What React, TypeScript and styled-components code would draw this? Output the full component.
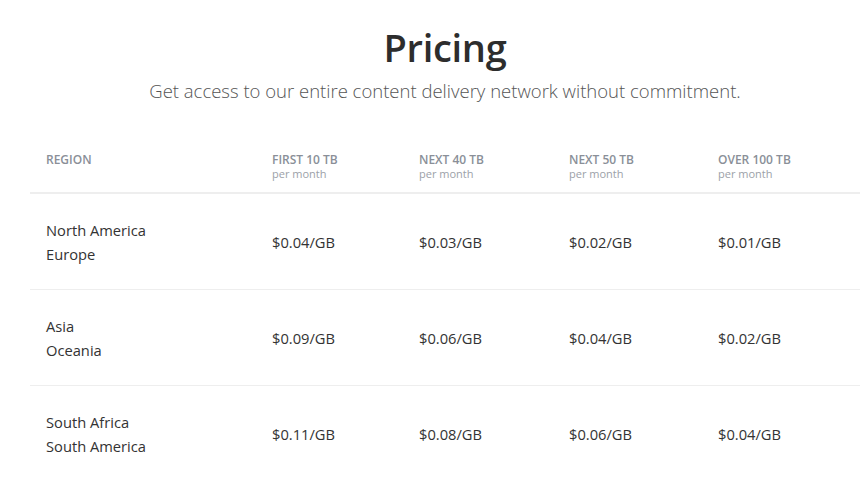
import styled, { createGlobalStyle } from 'styled-components';

const Global = createGlobalStyle`
  html, body {
    margin: 0;
    padding: 0;
    overflow: hidden;
    background: #fff;
  }
  body {
    font-family: "Open Sans", "Noto Sans", sans-serif;
    color: #333;
  }
`;

const Page = styled.div`
  width: 890px;
  padding-top: 22px;
`;

const Title = styled.h1`
  margin: 0;
  text-align: center;
  font-size: 38px;
  font-weight: 600;
  line-height: 50px;
  color: #2d2d2d;
  letter-spacing: -0.3px;
`;

const Subtitle = styled.p`
  margin: 6px 0 0;
  text-align: center;
  font-size: 18.5px;
  font-weight: 300;
  line-height: 26px;
  color: #555;
`;

const Table = styled.table`
  margin: 36px 30px 0;
  width: 830px;
  border-collapse: collapse;
  table-layout: fixed;
`;

const HeadCell = styled.th<{ $w: number }>`
  box-sizing: border-box;
  width: ${p => p.$w}px;
  text-align: left;
  vertical-align: top;
  padding: 12px 16px 12px;
  border-bottom: 2px solid #eeeeee;
  font-weight: 600;
  font-size: 12px;
  line-height: 15px;
  color: #8a8f98;
`;

const Per = styled.span`
  display: block;
  font-weight: 400;
  font-size: 11px;
  line-height: 13px;
  color: #9ca1a8;
`;

const Row = styled.tr`
  & + & td {
    border-top: 1px solid #eeeeee;
  }
`;

const Cell = styled.td`
  height: 95px;
  padding: 0 16px;
  vertical-align: middle;
  font-size: 14.7px;
  line-height: 24px;
  color: #333;
`;

const heads = [
  { label: 'REGION', w: 226 },
  { label: 'FIRST 10 TB', w: 147, per: true },
  { label: 'NEXT 40 TB', w: 150, per: true },
  { label: 'NEXT 50 TB', w: 149, per: true },
  { label: 'OVER 100 TB', w: 158, per: true },
];

const rows = [
  { regions: ['North America', 'Europe'], prices: ['$0.04/GB', '$0.03/GB', '$0.02/GB', '$0.01/GB'] },
  { regions: ['Asia', 'Oceania'], prices: ['$0.09/GB', '$0.06/GB', '$0.04/GB', '$0.02/GB'] },
  { regions: ['South Africa', 'South America'], prices: ['$0.11/GB', '$0.08/GB', '$0.06/GB', '$0.04/GB'] },
];

export default function App() {
  return (
    <>
      <Global />
      <Page>
        <Title>Pricing</Title>
        <Subtitle>Get access to our entire content delivery network without commitment.</Subtitle>
        <Table>
          <thead>
            <tr>
              {heads.map(h => (
                <HeadCell key={h.label} $w={h.w}>
                  {h.label}
                  {h.per && <Per>per month</Per>}
                </HeadCell>
              ))}
            </tr>
          </thead>
          <tbody>
            {rows.map(r => (
              <Row key={r.regions[0]}>
                <Cell>
                  {r.regions[0]}
                  <br />
                  {r.regions[1]}
                </Cell>
                {r.prices.map((p, i) => (
                  <Cell key={i}>{p}</Cell>
                ))}
              </Row>
            ))}
          </tbody>
        </Table>
      </Page>
    </>
  );
}
